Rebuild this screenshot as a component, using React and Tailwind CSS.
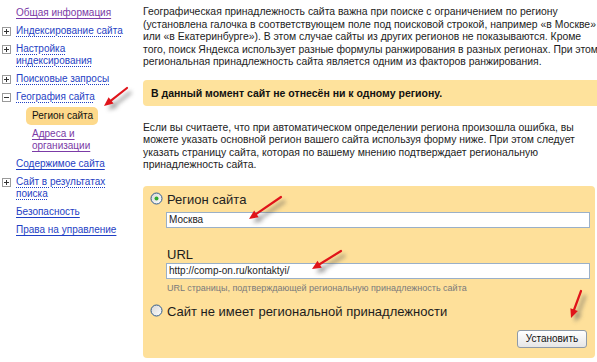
import React from "react";

const FONT = { fontFamily: '"Liberation Sans", Arial, sans-serif' };

function Toggle({ open }) {
  return (
    <svg width="9" height="9" viewBox="0 0 9 9" className="shrink-0">
      <rect x="0.5" y="0.5" width="8" height="8" fill="#fff" stroke="#9a9a9a" />
      <line x1="2" y1="4.5" x2="7" y2="4.5" stroke="#333" />
      {!open && <line x1="4.5" y1="2" x2="4.5" y2="7" stroke="#333" />}
    </svg>
  );
}

function NavItem({ toggle, open, dotted, visited, lines }) {
  const color = visited ? "text-[#7b3aa6]" : "text-[#1f3fc4]";
  const deco = dotted ? "decoration-dotted" : "decoration-solid";
  return (
    <div className="flex items-start mb-[6px]">
      <div className="w-[16px] pl-[2px] pt-[2px] shrink-0">{toggle && <Toggle open={open} />}</div>
      <div className={`${color} ${deco} underline underline-offset-2`}>
        {lines.map((l) => (
          <div key={l}>{l}</div>
        ))}
      </div>
    </div>
  );
}

function Radio({ checked }) {
  return (
    <svg width="13" height="13" viewBox="0 0 13 13" className="shrink-0">
      <defs>
        <linearGradient id={checked ? "rg1" : "rg2"} x1="0" y1="0" x2="1" y2="1">
          <stop offset="0" stopColor="#d6d6d6" />
          <stop offset="1" stopColor="#ffffff" />
        </linearGradient>
      </defs>
      <circle cx="6.5" cy="6.5" r="5.5" fill={`url(#${checked ? "rg1" : "rg2"})`} stroke="#2f5a8a" />
      {checked && <circle cx="6.5" cy="6.5" r="2" fill="#2faa2f" />}
    </svg>
  );
}

function Arrow({ x1, y1, x2, y2 }) {
  const dx = x2 - x1;
  const dy = y2 - y1;
  const len = Math.hypot(dx, dy);
  const ux = dx / len;
  const uy = dy / len;
  const hl = 9;
  const hw = 4;
  const bx = x2 - ux * hl;
  const by = y2 - uy * hl;
  const head = `${x2},${y2} ${bx - uy * hw},${by + ux * hw} ${bx + uy * hw},${by - ux * hw}`;
  return (
    <g>
      <g filter="url(#blur)" opacity="0.55" transform="translate(4 4)">
        <line x1={x1} y1={y1} x2={bx} y2={by} stroke="#555" strokeWidth="3" />
        <polygon points={head} fill="#555" />
      </g>
      <line x1={x1} y1={y1} x2={bx + ux} y2={by + uy} stroke="#e0141a" strokeWidth="2.2" strokeLinecap="round" />
      <polygon points={head} fill="#e0141a" />
    </g>
  );
}

export default function App() {
  return (
    <div className="relative w-[597px] h-[362px] bg-white overflow-hidden flex text-[10px] leading-[12px] text-[#1c1c1c]" style={FONT}>
      <aside className="w-[143px] shrink-0 pt-[7px]">
        <NavItem visited lines={["Общая информация"]} />
        <NavItem toggle dotted lines={["Индексирование сайта"]} />
        <NavItem toggle dotted lines={["Настройка", "индексирования"]} />
        <NavItem toggle dotted lines={["Поисковые запросы"]} />
        <div className="mb-[2px]">
          <NavItem toggle open dotted lines={["География сайта"]} />
        </div>
        <div className="ml-[26px] -mt-[2px] mb-[3px] w-[72px] h-[18px] rounded-[5px] bg-[#fdd98b] pl-[6px] pt-[3px] text-[#111] whitespace-nowrap">
          Регион сайта
        </div>
        <div className="ml-[16px]">
          <NavItem visited lines={["Адреса и", "организации"]} />
        </div>
        <NavItem lines={["Содержимое сайта"]} />
        <NavItem toggle dotted lines={["Сайт в результатах", "поиска"]} />
        <NavItem lines={["Безопасность"]} />
        <NavItem lines={["Права на управление"]} />
      </aside>

      <main className="flex-1 min-w-0 pt-[6px] whitespace-nowrap">
        <div className="leading-[12.5px] text-[10.4px]">
          <div>Географическая принадлежность сайта важна при поиске с ограничением по региону</div>
          <div>(установлена галочка в соответствующем поле под поисковой строкой, например «в Москве»</div>
          <div>или «в Екатеринбурге»). В этом случае сайты из других регионов не показываются. Кроме</div>
          <div>того, поиск Яндекса использует разные формулы ранжирования в разных регионах. При этом</div>
          <div>региональная принадлежность сайта является одним из факторов ранжирования.</div>
        </div>

        <div className="mt-[11px] h-[26px] rounded-l-[4px] bg-[#fee29c] pl-[8px] flex items-center font-bold text-[10.5px] text-[#111]">
          В данный момент сайт не отнесён ни к одному региону.
        </div>

        <div className="mt-[16px] leading-[12.5px] text-[10.4px]">
          <div>Если вы считаете, что при автоматическом определении региона произошла ошибка, вы</div>
          <div>можете указать основной регион вашего сайта используя форму ниже. При этом следует</div>
          <div>указать страницу сайта, которая по вашему мнению подтверждает региональную</div>
          <div>принадлежность сайта.</div>
        </div>

        <div className="mt-[14px] mr-[2px] h-[172px] rounded-[4px] bg-[#fee09a] pl-[7px] pr-[5px] pt-[6px]">
          <div className="flex items-center gap-[4px] h-[14px] text-[13px] leading-[14px] text-[#222]">
            <Radio checked />
            <span className="mt-[3px]">Регион сайта</span>
          </div>
          <div className="ml-[16px] mt-[6px] h-[16px] border border-[#9ab0c8] bg-white px-[2px] text-[10px] leading-[14px]">
            Москва
          </div>
          <div className="ml-[17px] mt-[20px] text-[13px] leading-[14px]">URL</div>
          <div className="ml-[16px] mt-[1px] h-[16px] border border-[#9ab0c8] bg-white px-[2px] text-[10px] leading-[14px]">
            http://comp-on.ru/kontaktyi/
          </div>
          <div className="ml-[17px] mt-[4px] text-[9px] leading-[11px] text-[#7a7a7a]">
            URL страницы, подтверждающей региональную принадлежность сайта
          </div>
          <div className="flex items-center gap-[4px] mt-[10px] h-[14px] text-[13px] leading-[14px]">
            <Radio />
            <span className="mt-[3px]">Сайт не имеет региональной принадлежности</span>
          </div>
          <div className="flex justify-end mt-[12px] pr-[3px]">
            <button className="w-[70px] h-[18px] rounded-[3px] border border-[#8e9aa8] bg-gradient-to-b from-white to-[#e6e6e6] text-[10px] leading-[16px] text-[#111]">
              Установить
            </button>
          </div>
        </div>
      </main>

      <svg className="absolute inset-0 pointer-events-none" width="597" height="362">
        <defs>
          <filter id="blur" x="-50%" y="-50%" width="200%" height="200%">
            <feGaussianBlur stdDeviation="2" />
          </filter>
        </defs>
        <Arrow x1={127} y1={88} x2={104} y2={106} />
        <Arrow x1={281} y1={197} x2={249} y2={219} />
        <Arrow x1={341} y1={251} x2={312} y2={269} />
        <Arrow x1={581} y1={291} x2={571} y2={318} />
      </svg>
    </div>
  );
}
